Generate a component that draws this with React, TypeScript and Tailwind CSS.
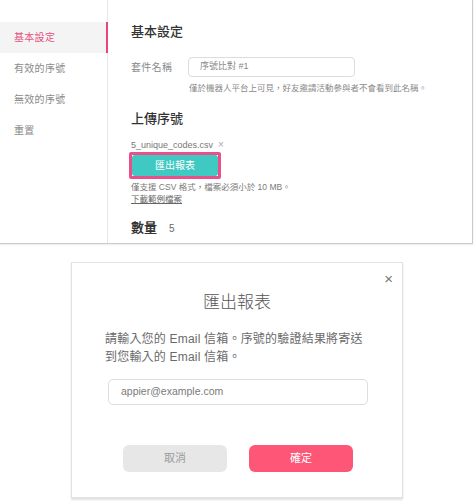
import React from "react";

const font = { fontFamily: '"Liberation Sans", "Noto Sans CJK TC", sans-serif' };

export default function App() {
  return (
    <div lang="zh-TW" className="w-[474px] h-[501px] bg-white overflow-hidden" style={font}>
      {/* top panel */}
      <div className="w-[473px] h-[244px] flex border-r border-b border-[#c9c9c9] shadow-[0_1px_2px_rgba(0,0,0,0.08)]">
        <div className="w-[108px] shrink-0 border-r border-[#e8e8e8] pt-[22px]">
          <div className="h-[31px] mr-[-1px] flex items-center pl-[14px] bg-[#f4f4f5] border-r-2 border-[#e8457a] text-[10px] tracking-[0.3px] text-[#e5527c]">
            基本設定
          </div>
          <div className="h-[31px] flex items-center pl-[14px] text-[10px] tracking-[0.3px] text-[#8a8a8a]">有效的序號</div>
          <div className="h-[31px] flex items-center pl-[14px] text-[10px] tracking-[0.3px] text-[#8a8a8a]">無效的序號</div>
          <div className="h-[31px] flex items-center pl-[14px] text-[10px] tracking-[0.3px] text-[#8a8a8a]">重置</div>
        </div>
        <div className="flex-1 pl-[23px] pt-[24px] flex flex-col items-start">
          <div className="text-[13px] leading-[16px] text-[#333] font-medium">基本設定</div>
          <div className="mt-[17px] flex items-center">
            <div className="w-[57px] text-[10px] tracking-[0.3px] text-[#8a8a8a]">套件名稱</div>
            <div className="w-[167px] h-[20px] border border-[#dcdcdc] rounded-[4px] flex items-center pl-[11px] text-[9px] text-[#888]">
              序號比對 #1
            </div>
          </div>
          <div className="mt-[5px] ml-[58px] text-[8.5px] leading-[12px] text-[#8a8a8a] whitespace-nowrap">
            僅於機器人平台上可見，好友邀請活動參與者不會看到此名稱。
          </div>
          <div className="mt-[17px] text-[13px] leading-[16px] text-[#333] font-medium">上傳序號</div>
          <div className="mt-[12px] text-[9px] leading-[12px] text-[#777] flex items-center gap-[5px]">
            <span>5_unique_codes.csv</span>
            <span className="text-[#aaa] text-[10px]">×</span>
          </div>
          <div className="mt-[1px] -ml-[2px] border-[3px] border-[#e9508a] rounded-[2px]">
            <div className="w-[86px] h-[21px] bg-[#40c8c2] rounded-[3px] flex items-center justify-center text-[10px] text-white">
              匯出報表
            </div>
          </div>
          <div className="mt-[2px] text-[8.5px] leading-[12px] text-[#7a7a7a] whitespace-nowrap">
            僅支援 CSV 格式，檔案必須小於 10 MB。
          </div>
          <div className="text-[8.5px] leading-[12px] text-[#666] underline">下載範例檔案</div>
          <div className="mt-[15px] flex items-center">
            <span className="text-[13px] leading-[16px] text-[#333] font-bold">數量</span>
            <span className="ml-[12px] text-[10px] text-[#666]">5</span>
          </div>
        </div>
      </div>

      {/* modal */}
      <div className="relative mt-[18px] ml-[71px] w-[332px] h-[236px] border border-[#e2e2e2] bg-white shadow-[0_2px_2px_rgba(0,0,0,0.12)] flex flex-col">
        <button className="absolute right-[9px] top-[8px] text-[15px] leading-[16px] text-[#777]">×</button>
        <div className="pt-[28px] text-center text-[17px] leading-[24px] text-[#555] font-light">匯出報表</div>
        <div className="mt-[15px] ml-[33px] text-[12px] tracking-[0.2px] leading-[18px] text-[#6a6a6a] whitespace-nowrap">
          請輸入您的 Email 信箱。序號的驗證結果將寄送
          <br />
          到您輸入的 Email 信箱。
        </div>
        <div className="mt-[13px] ml-[36px] w-[260px] h-[26px] border border-[#dedede] rounded-[5px] flex items-center pl-[12px] text-[10.5px] text-[#7a7a7a]">
          appier@example.com
        </div>
        <div className="mt-[40px] ml-[51px] flex gap-[22px]">
          <div className="w-[104px] h-[27px] rounded-[6px] bg-[#e7e7e7] flex items-center justify-center text-[11px] text-[#9a9a9a]">
            取消
          </div>
          <div className="w-[104px] h-[27px] rounded-[6px] bg-[#fd5677] flex items-center justify-center text-[11px] text-white">
            確定
          </div>
        </div>
      </div>
    </div>
  );
}
